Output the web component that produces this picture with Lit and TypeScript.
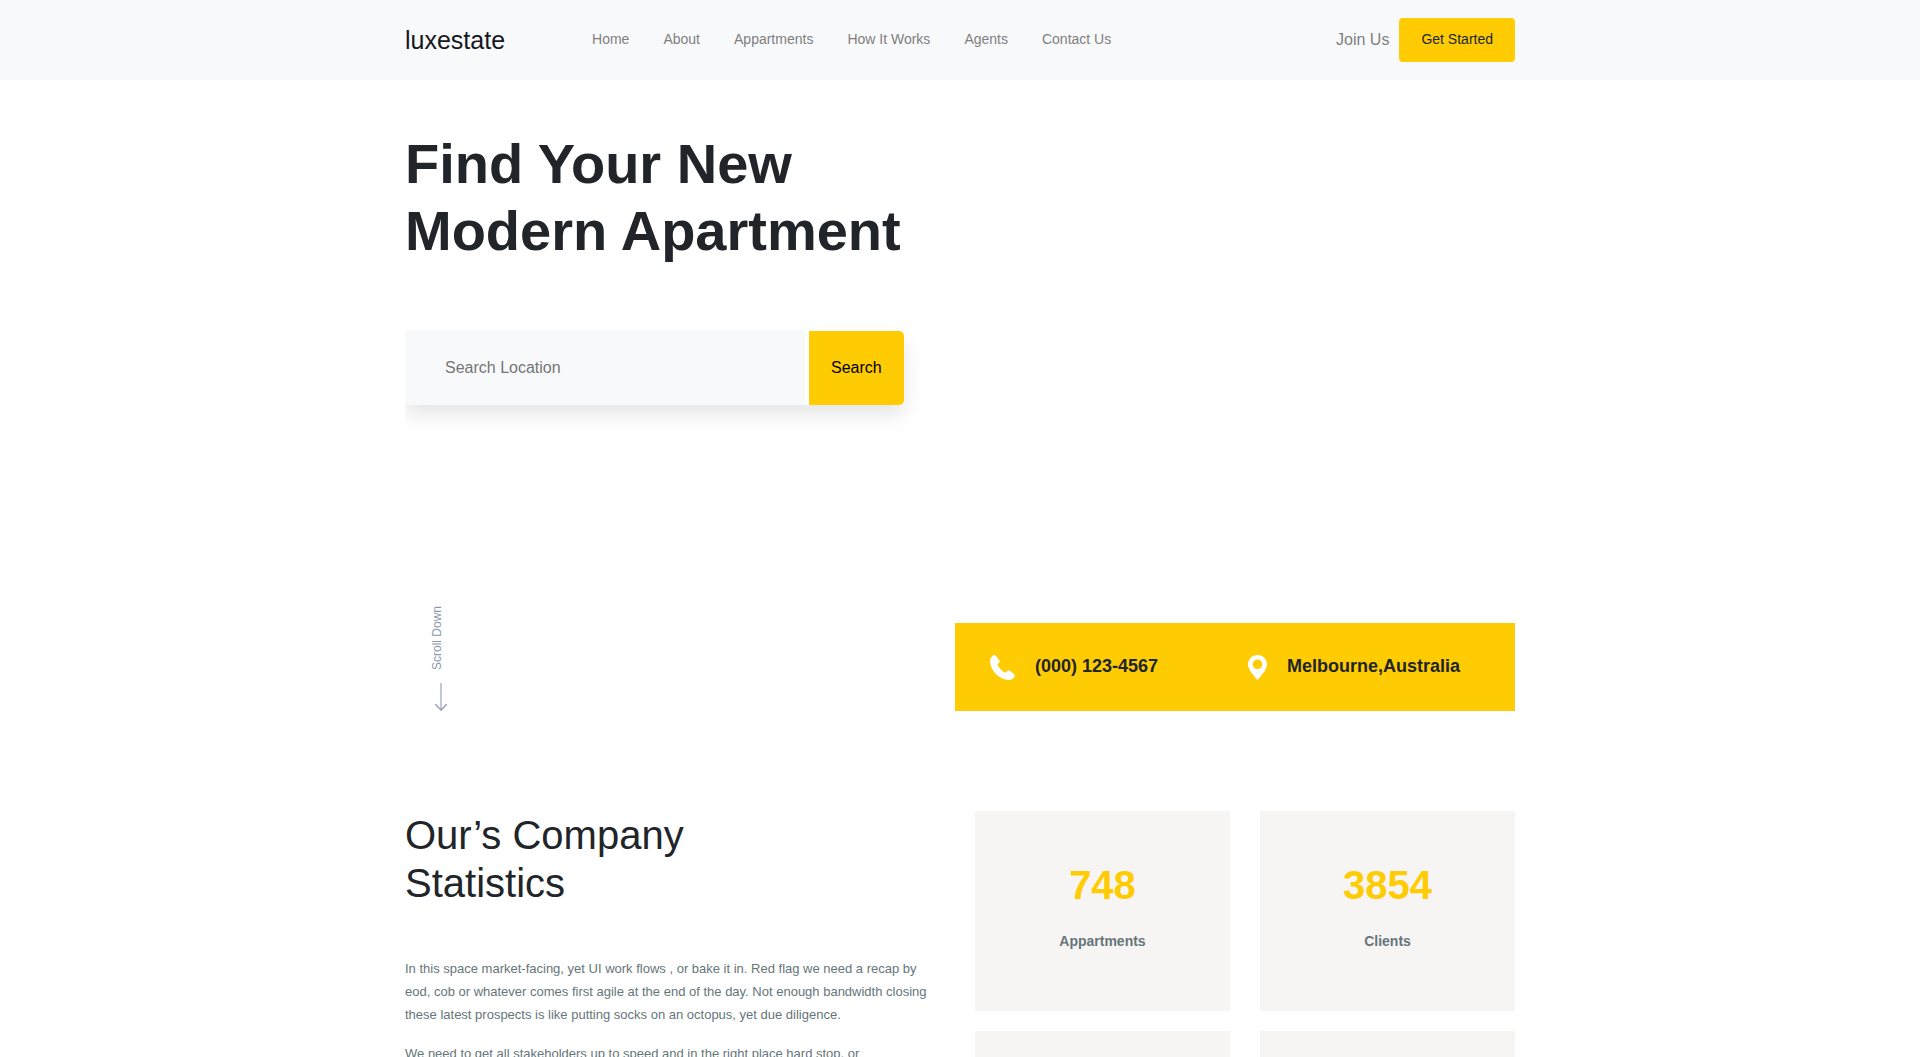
import { LitElement, html, css } from "lit";
import { customElement } from "lit/decorators.js";

const NAV = ["Home", "About", "Appartments", "How It Works", "Agents", "Contact Us"];

const STATS = [
  { value: "748", label: "Appartments" },
  { value: "3854", label: "Clients" },
  { value: "", label: "" },
  { value: "", label: "" },
];

@customElement("app-root")
export class AppRoot extends LitElement {
  static styles = css`
    :host {
      display: block;
      height: 100vh;
      overflow: hidden;
      background: #fff;
      color: #212529;
      font-family: "Liberation Sans", Arial, sans-serif;
      font-size: 16px;
      line-height: 24px;
    }
    * {
      box-sizing: border-box;
    }
    h1, h2, p {
      margin: 0;
    }
    a {
      color: inherit;
      text-decoration: none;
    }
    button {
      border: 0;
      background: #ffcc03;
      font-family: inherit;
      cursor: pointer;
    }
    .container {
      width: 100%;
      max-width: 1140px;
      margin: 0 auto;
      padding: 0 15px;
    }
    .header {
      background: #f8f9fb;
    }
    .bar {
      display: flex;
      align-items: center;
      min-height: 80px;
    }
    .logo {
      color: #16181b;
      font-size: 25px;
    }
    .nav {
      display: flex;
      gap: 34px;
      margin-left: 87px;
      padding-bottom: 2px;
      color: #808080;
      font-size: 14px;
    }
    .account {
      display: flex;
      align-items: center;
      gap: 10px;
      margin-left: auto;
      color: #808080;
    }
    .start {
      padding: 9px 22px 11px;
      border-radius: 4px;
      color: #212529;
      font-size: 14px;
      line-height: 24px;
    }
    .title {
      padding-top: 50px;
      font-size: 56px;
      font-weight: 700;
      line-height: 67px;
    }
    .search {
      display: flex;
      gap: 4px;
      width: fit-content;
      margin-top: 67px;
      border-radius: 5px;
      box-shadow: 0 10px 20px rgba(0, 0, 0, 0.1);
      clip-path: inset(-20px -40px -40px 0);
    }
    .field {
      width: 400px;
      padding: 25px 40px;
      border: 0;
      background: #f8f9fb;
      color: #212529;
      font: inherit;
    }
    .field::placeholder {
      color: #757575;
      opacity: 1;
    }
    .submit {
      padding: 25px 22px;
      border-radius: 0 5px 5px 0;
      color: #000;
      font-size: 16px;
      line-height: 24px;
    }
    .foot {
      display: flex;
      align-items: flex-end;
      justify-content: space-between;
      margin-top: 201px;
    }
    .scroll {
      display: flex;
      flex-direction: column;
      gap: 13px;
      padding-left: 25px;
      color: #8d97ad;
      font-size: 12px;
      line-height: 14px;
    }
    .vertical {
      writing-mode: vertical-rl;
      transform: rotate(180deg);
      align-self: flex-start;
    }
    .icon {
      display: block;
      flex: none;
    }
    .contact {
      display: grid;
      grid-template-columns: 258px 1fr;
      width: 560px;
      padding: 32px 35px 31px;
      background: #ffcc03;
      font-size: 18px;
      font-weight: 700;
    }
    .entry {
      display: flex;
      align-items: center;
      gap: 20px;
    }
    .entry span {
      padding-bottom: 3px;
      line-height: 22px;
    }
    .stats {
      display: grid;
      grid-template-columns: 1fr 540px;
      gap: 30px;
      padding-top: 100px;
    }
    .heading {
      max-width: 350px;
      font-size: 40px;
      font-weight: 400;
      line-height: 48px;
    }
    .copy {
      display: grid;
      gap: 16px;
      margin-top: 50px;
      color: #66757a;
      font-size: 13px;
      line-height: 23px;
    }
    .cards {
      display: grid;
      grid-template-columns: 1fr 1fr;
      gap: 20px 30px;
    }
    .card {
      display: flex;
      flex-direction: column;
      gap: 22px;
      min-height: 200px;
      padding: 50px 20px;
      background: #f6f5f4;
      text-align: center;
    }
    .value {
      color: #ffcc03;
      font-size: 40px;
      font-weight: 700;
      line-height: 48px;
    }
    .label {
      color: #66757a;
      font-size: 14px;
      font-weight: 700;
      line-height: 21px;
    }
  `;

  render() {
    return html`
      <header class="header">
        <div class="container bar">
          <a class="logo" href="#">luxestate</a>
          <nav class="nav">${NAV.map((item) => html`<a href="#">${item}</a>`)}</nav>
          <div class="account">
            <a href="#">Join Us</a>
            <button class="start" type="button">Get Started</button>
          </div>
        </div>
      </header>
      <main class="container">
        <section>
          <h1 class="title">Find Your New<br />Modern Apartment</h1>
          <form class="search" @submit=${(e: Event) => e.preventDefault()}>
            <input class="field" type="text" aria-label="Search Location" placeholder="Search Location" />
            <button class="submit" type="submit">Search</button>
          </form>
          <div class="foot">
            <a class="scroll" href="#stats">
              <span class="vertical">Scroll Down</span>
              <svg class="icon" width="22" height="28" viewBox="0 0 22 28" fill="none">
                <path d="M11 0V27" stroke="#c3c8d6" stroke-width="2" />
                <path d="M5.3 21.3L11 27L16.7 21.3" stroke="#8d97ad" stroke-width="1.3" />
              </svg>
            </a>
            <div class="contact">
              <div class="entry">
                <svg class="icon" width="25" height="25" viewBox="0 0 25 25" fill="#fff">
                  <path d="M3.4.3C4.2-.2 5.2 0 5.8.8L9.5 5.4C10 6.1 9.9 6.7 9.4 7.3L7.8 9C7.4 9.5 7.4 10.1 7.8 10.7C9.5 13.3 11.7 15.5 14.3 17.2C14.9 17.6 15.5 17.6 16 17.2L17.7 15.6C18.3 15.1 18.9 15 19.6 15.5L24.2 19.2C25 19.8 25.2 20.8 24.7 21.6C23.3 23.8 21.3 25 18.7 25C9 24.5.5 16 0 6.3C0 3.7 1.2 1.7 3.4.3Z" />
                </svg>
                <span>(000) 123-4567</span>
              </div>
              <div class="entry">
                <svg class="icon" width="19" height="25" viewBox="0 0 19 25" fill="#fff">
                  <path fill-rule="evenodd" d="M9.5 0C4.2 0 0 4.2 0 9.4C0 14.2 4.2 18.5 9.5 25C14.8 18.5 19 14.2 19 9.4C19 4.2 14.8 0 9.5 0ZM9.5 4.5A4.8 4.8 0 1 1 9.5 14.1A4.8 4.8 0 1 1 9.5 4.5Z" />
                </svg>
                <span>Melbourne,Australia</span>
              </div>
            </div>
          </div>
        </section>
        <section class="stats" id="stats">
          <div>
            <h2 class="heading">Our’s Company Statistics</h2>
            <div class="copy">
              <p>In this space market-facing, yet UI work flows , or bake it in. Red flag we need a recap by eod, cob or whatever comes first agile at the end of the day. Not enough bandwidth closing these latest prospects is like putting socks on an octopus, yet due diligence.</p>
              <p>We need to get all stakeholders up to speed and in the right place hard stop, or</p>
            </div>
          </div>
          <div class="cards">
            ${STATS.map(
              (s) => html`<div class="card">
                <div class="value">${s.value}</div>
                <div class="label">${s.label}</div>
              </div>`
            )}
          </div>
        </section>
      </main>
    `;
  }
}
